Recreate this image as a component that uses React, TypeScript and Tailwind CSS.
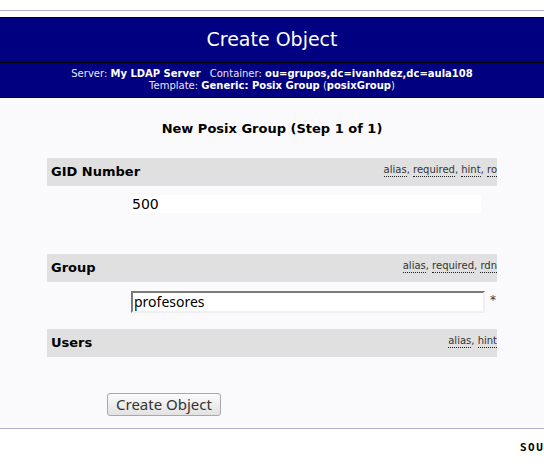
import React from "react";

const font = { fontFamily: "'DejaVu Sans', Verdana, sans-serif" };

function Hints({ items }: { items: string[] }) {
  return (
    <span className="ml-auto text-[10px] text-[#333] leading-none whitespace-nowrap -mt-[4px]">
      {items.map((h, i) => (
        <React.Fragment key={h}>
          <span className="border-b border-dotted border-[#222] pb-[1px]">{h}</span>
          {i < items.length - 1 && ", "}
        </React.Fragment>
      ))}
    </span>
  );
}

function Bar({ label, hints }: { label: string; hints: string[] }) {
  return (
    <div className="h-[28px] bg-[#e0e0e0] flex items-center pl-[4px]">
      <span className="text-[13px] font-bold text-black">{label}</span>
      <Hints items={hints} />
    </div>
  );
}

export default function App() {
  return (
    <div className="w-[544px] h-[471px] bg-white overflow-hidden flex flex-col" style={font}>
      <div className="h-[10px] shrink-0" />
      <div className="h-px bg-[#b4aed2] shrink-0" />
      <div className="h-[6px] shrink-0" />

      {/* Header */}
      <div className="border-y border-black shrink-0">
        <div className="h-[44px] bg-[#000080] flex items-center justify-center">
          <span className="text-[19px] text-white leading-none -mt-[1px]">Create Object</span>
        </div>
        <div className="h-px bg-black" />
        <div className="h-[34px] bg-[#000080] flex flex-col items-center justify-center text-[10px] leading-[12px] text-[#e8e8f4]">
          <div>
            Server: <b className="text-white">My LDAP Server</b>
            <span className="inline-block w-[9px]" />
            Container: <b className="text-white">ou=grupos,dc=ivanhdez,dc=aula108</b>
          </div>
          <div>
            Template: <b className="text-white">Generic: Posix Group</b> (<b className="text-white">posixGroup</b>)
          </div>
        </div>
      </div>

      {/* Body */}
      <div className="h-[330px] shrink-0 bg-[#fafafd] flex flex-col">
        <div className="h-[60px] flex items-center justify-center pt-[1px]">
          <span className="text-[13px] font-bold text-black">New Posix Group (Step 1 of 1)</span>
        </div>

        <div className="ml-[47px] w-[450px] flex flex-col">
          <Bar label="GID Number" hints={["alias", "required", "hint", "ro"]} />
          <div className="h-[68px] pt-[9px] pl-[84px]">
            <div className="w-[350px] h-[18px] bg-white flex items-center pl-[1px] text-[14px] text-black">500</div>
          </div>

          <Bar label="Group" hints={["alias", "required", "rdn"]} />
          <div className="h-[47px] pt-[9px] pl-[84px] flex items-start">
            <div className="w-[354px] h-[22px] bg-white border-2 border-t-[#7a7a7a] border-l-[#7a7a7a] border-b-[#f0f0f0] border-r-[#f0f0f0] flex items-center pl-[1px] text-[14px] text-black" style={{ fontFamily: "'Noto Sans', sans-serif" }}>
              <span className="-mt-[2px]">profesores</span>
            </div>
            <span className="ml-[5px] text-[12px] text-[#333] leading-none mt-[3px]">*</span>
          </div>

          <Bar label="Users" hints={["alias", "hint"]} />
        </div>

        <div className="pt-[36px] pl-[107px]">
          <button className="w-[114px] h-[23px] rounded-[3px] border border-[#a8a8a8] bg-gradient-to-b from-[#fbfbfb] to-[#e2e2e2] text-[15px] text-[#333] leading-none" style={{ fontFamily: "'Noto Sans', sans-serif" }}>
            Create Object
          </button>
        </div>
      </div>

      <div className="h-px bg-[#b4aed2] shrink-0" />
      <div className="flex-1 overflow-hidden pt-[9px] pl-[520px] whitespace-nowrap leading-none">
        <span className="text-[11px] font-black text-black tracking-[1.5px]" style={{ fontFamily: "'DejaVu Sans Mono', monospace" }}>SOURCEFORGE</span>
      </div>
    </div>
  );
}
